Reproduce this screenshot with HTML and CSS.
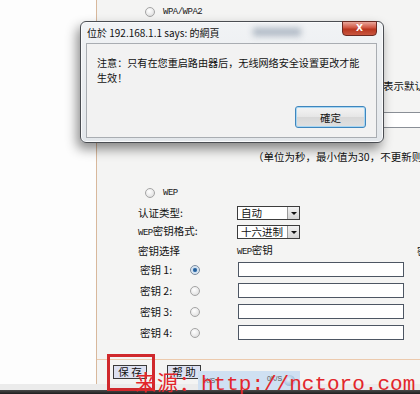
FILE: index.html
```html
<!DOCTYPE html>
<html>
<head>
<meta charset="utf-8">
<link rel="stylesheet" href="styles.css">
</head>
<body>
<div class="screen">
  <div class="main">
    <div class="side"></div>
    <div class="panel">
      <div class="form">
        <div class="row r-wpa"><span class="radio"></span><span class="en">WPA/WPA2</span></div>
        <div class="row r-default">表示默认值</div>
        <div class="row r-interval"><span class="input short"></span></div>
        <div class="row r-note">（单位为秒，最小值为30，不更新则为0）</div>
        <div class="row r-wep"><span class="radio"></span><span class="en">WEP</span></div>
        <div class="row r-auth">
          <span class="label">认证类型:</span>
          <span class="select"><span class="sel-text">自动</span><span class="sel-btn"></span></span>
        </div>
        <div class="row r-format">
          <span class="label"><span class="en">WEP</span>密钥格式:</span>
          <span class="select"><span class="sel-text">十六进制</span><span class="sel-btn"></span></span>
        </div>
        <div class="row r-head">
          <span class="label">密钥选择</span>
          <span class="col2"><span class="en">WEP</span>密钥</span>
          <span class="col3">密钥类型</span>
        </div>
        <div class="row r-key r-key1"><span class="klabel">密钥 1:</span><span class="radio checked"></span><span class="input"></span></div>
        <div class="row r-key"><span class="klabel">密钥 2:</span><span class="radio"></span><span class="input"></span></div>
        <div class="row r-key"><span class="klabel">密钥 3:</span><span class="radio"></span><span class="input"></span></div>
        <div class="row r-key"><span class="klabel">密钥 4:</span><span class="radio"></span><span class="input"></span></div>
      </div>
      <div class="footer">
        <span class="btn">保 存</span>
        <span class="btn">帮 助</span>
      </div>
    </div>
  </div>
  <div class="statusbar"></div>
  <div class="taskbar"></div>

  <div class="dialog">
    <div class="dlg-title">位於 192.168.1.1 says: 的網頁</div>
    <div class="dlg-blur"></div>
    <div class="dlg-close">X</div>
    <div class="dlg-body">
      <div class="dlg-msg">注意：只有在您重启路由器后，无线网络安全设置更改才能<br>生效！</div>
      <div class="dlg-ok">確定</div>
    </div>
  </div>

  <div class="widget">
    <span class="w-a">K/S</span>
    <span class="w-b">0K/S</span>
    <span class="w-globe"></span>
  </div>
  <div class="redbox"></div>
  <div class="watermark"><span class="wm-cjk">来源：</span><span class="wm-url">http://nctoro.com</span></div>
</div>
</body>
</html>
```

FILE: styles.css
```css
* { box-sizing: border-box; }
html, body { margin: 0; padding: 0; }
body {
  width: 420px;
  height: 394px;
  overflow: hidden;
  font-family: "Noto Sans CJK SC", sans-serif;
  font-size: 10.5px;
  color: #111;
  background: #fff;
}
.screen {
  position: relative;
  width: 420px;
  height: 394px;
  display: flex;
  flex-direction: column;
  overflow: hidden;
}
.main {
  display: flex;
  height: 384px;
}
.side {
  width: 96px;
  background: #fdfdfd;
}
.panel {
  flex: 1;
  display: flex;
  flex-direction: column;
  background: #f4f4f3;
  border-left: 1px solid #d8b89c;
  overflow: hidden;
}
.form {
  height: 359px;
  padding-left: 41px;
  display: flex;
  flex-direction: column;
}
.row {
  display: flex;
  align-items: center;
  white-space: nowrap;
  line-height: 12px;
  height: 12px;
}
.en {
  font-family: "Liberation Mono", monospace;
  font-size: 9px;
  letter-spacing: -0.5px;
  color: #1a1a1a;
}
.radio {
  display: inline-block;
  width: 10px;
  height: 10px;
  border-radius: 50%;
  border: 1px solid #a4a4a4;
  background: radial-gradient(circle at 40% 35%, #ffffff 0%, #e8e8e8 60%, #cfcfcf 100%);
  flex: none;
}
.radio.checked {
  border-color: #7d8da0;
  background: radial-gradient(circle, #1d4f82 0%, #3a75b0 30%, #cfe0f0 45%, #f0f0f0 100%);
}
.r-wpa { margin-top: 6px; padding-left: 7px; }
.r-wpa .radio, .r-wep .radio { margin-right: 8px; }
.r-default { margin-top: 62px; padding-left: 245px; }
.r-interval { margin-top: 20px; height: 16px; padding-left: 245px; }
.r-note { margin-top: 23px; padding-left: 115px; }
.r-wep { margin-top: 24px; padding-left: 7px; }
.r-auth { margin-top: 7px; height: 14px; }
.r-format { margin-top: 5px; height: 14px; }
.r-head { margin-top: 6px; }
.r-key { height: 15px; margin-top: 6px; }
.r-key.r-key1 { margin-top: 5px; }
.label { width: 99px; flex: none; }
.col2 { width: 180px; flex: none; }
.col3 { flex: none; }
.select {
  display: flex;
  width: 63px;
  height: 14px;
  border: 1px solid #3c3c3c;
  background: #fff;
  align-items: center;
}
.sel-text { flex: 1; padding-left: 3px; line-height: 12px; }
.sel-btn {
  width: 12px;
  height: 12px;
  background: linear-gradient(#f2f2f2, #d4d4d4);
  border-left: 1px solid #9a9a9a;
  position: relative;
}
.sel-btn::after {
  content: "";
  position: absolute;
  left: 3px;
  top: 5px;
  border-left: 3px solid transparent;
  border-right: 3px solid transparent;
  border-top: 3px solid #111;
}
.klabel { width: 52px; padding-left: 2px; flex: none; }
.r-key .radio { margin-right: 38px; }
.input {
  display: inline-block;
  width: 166px;
  height: 15px;
  background: #fff;
  border: 1px solid #4d5663;
  flex: none;
}
.input.short { width: 40px; height: 16px; border-color: #8a8f96; }

.footer {
  flex: 1;
  border-top: 1px solid #eccaad;
  display: flex;
  gap: 20px;
  padding: 5px 0 0 16px;
}
.btn {
  display: flex;
  align-items: center;
  justify-content: center;
  width: 34px;
  height: 14px;
  border: 1px solid #3a3a3a;
  background: #dde1f1;
  font-size: 10.5px;
  line-height: 12px;
  color: #111;
}
.statusbar { height: 6px; background: #ebebeb; }
.taskbar { flex: 1; background: linear-gradient(#4a4a4a, #1e1e1e); }

/* Dialog overlay */
.dialog {
  position: absolute;
  left: 80px;
  top: 21px;
  width: 304px;
  height: 122px;
  border: 1px solid #4a4d52;
  border-radius: 6px;
  background: linear-gradient(#f1f3f5, #e3e7eb);
  box-shadow: -3px 6px 12px rgba(0,0,0,0.45), inset 0 0 0 1px #fafbfc;
  display: flex;
  flex-direction: column;
}
.dlg-title {
  height: 21px;
  padding: 5px 0 0 6px;
  font-size: 10px;
  line-height: 12px;
  color: #111;
  white-space: nowrap;
}
.dlg-blur {
  position: absolute;
  left: 172px;
  top: 6px;
  width: 48px;
  height: 8px;
  background: #aeb8c4;
  filter: blur(3px);
}
.dlg-close {
  position: absolute;
  right: 6px;
  top: -1px;
  width: 35px;
  height: 15px;
  border: 1px solid #6b2a22;
  border-radius: 0 0 4px 4px;
  background: linear-gradient(#eaa79b, #cf5440 45%, #b8361f 55%, #c9563f);
  color: #fff;
  font-family: "DejaVu Sans", sans-serif;
  font-weight: bold;
  font-size: 9px;
  line-height: 13px;
  text-align: center;
}
.dlg-body {
  margin: 0 6px 4px 5px;
  flex: 1;
  background: #f2f2f2;
  border: 1px solid #a9adb2;
  display: flex;
  flex-direction: column;
  justify-content: space-between;
  padding: 11px 10px 9px 10px;
}
.dlg-msg {
  font-size: 10.1px;
  line-height: 15px;
  color: #111;
  white-space: nowrap;
}
.dlg-ok {
  align-self: flex-end;
  width: 71px;
  height: 22px;
  border: 1px solid #3f86bd;
  border-radius: 3px;
  background: linear-gradient(#f4f4f4, #e6e6e6 50%, #d8d8d8 51%, #e0e0e0);
  box-shadow: inset 0 0 0 1px #a7d6f3;
  display: flex;
  align-items: center;
  justify-content: center;
  font-size: 10.5px;
  color: #111;
}

/* Status widget */
.widget {
  position: absolute;
  left: 198px;
  top: 371px;
  width: 102px;
  height: 19px;
  background: #cfe0f2;
  font-family: "Liberation Sans", sans-serif;
  font-size: 7px;
  color: #555;
}
.w-a { position: absolute; left: 6px; top: 6px; }
.w-b { position: absolute; left: 69px; top: 4px; }
.w-globe {
  position: absolute;
  left: 86px;
  top: 4px;
  width: 11px;
  height: 11px;
  border-radius: 50%;
  background: radial-gradient(circle at 40% 40%, #e5f0fa, #7fa6cc);
}

.redbox {
  position: absolute;
  left: 107px;
  top: 354px;
  width: 48px;
  height: 37px;
  border: 3px solid #d0282c;
}
.watermark {
  position: absolute;
  left: 135px;
  top: 368px;
  height: 26px;
  white-space: nowrap;
  color: #e3262b;
  line-height: 26px;
  display: flex;
  align-items: baseline;
}
.wm-cjk { font-family: "Noto Sans CJK SC", serif; font-size: 21px; letter-spacing: 1px; }
.wm-url { font-family: "Liberation Mono", monospace; font-size: 21px; }
```
